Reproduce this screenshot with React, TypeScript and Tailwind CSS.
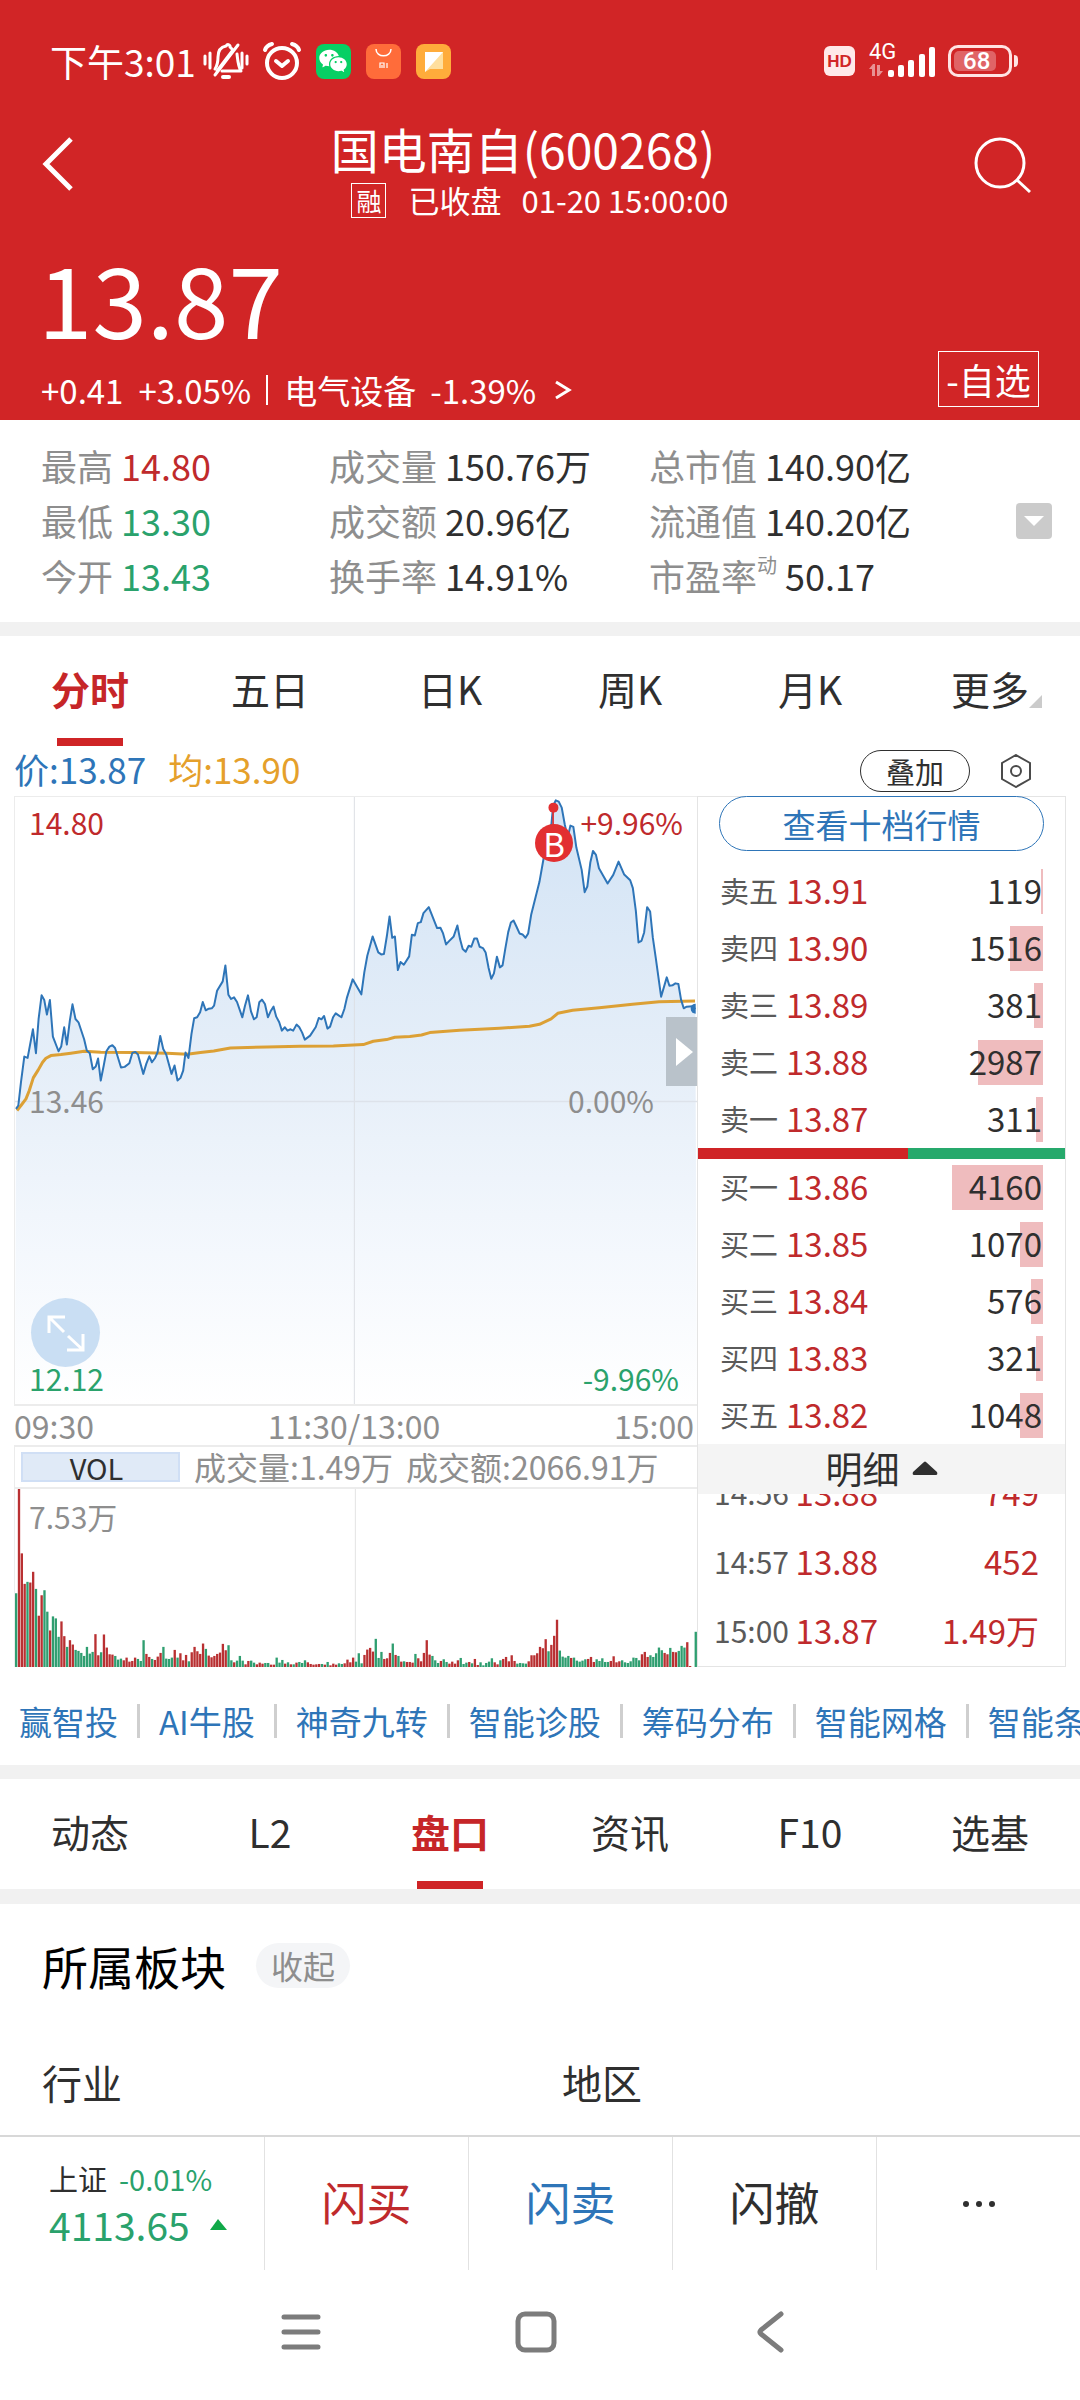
import React, { useState } from 'react';
import { RiWechatFill } from 'react-icons/ri';

interface BookRow {
  label: string;
  price: string;
  volume: string;
  bar: number;
}

interface Stat {
  label: string;
  sup?: string;
  value: string;
  color: string;
}

const PERIODS = ['分时', '五日', '日K', '周K', '月K', '更多'];
const SECTIONS = ['动态', 'L2', '盘口', '资讯', 'F10', '选基'];
const TOOLS = ['赢智投', 'AI牛股', '神奇九转', '智能诊股', '筹码分布', '智能网格', '智能条'];

const STATS: Stat[][] = [
  [
    { label: '最高', value: '14.80', color: 'text-[#bf2a2c]' },
    { label: '最低', value: '13.30', color: 'text-[#2aa26c]' },
    { label: '今开', value: '13.43', color: 'text-[#2aa26c]' },
  ],
  [
    { label: '成交量', value: '150.76万', color: 'text-[#2f2f2f]' },
    { label: '成交额', value: '20.96亿', color: 'text-[#2f2f2f]' },
    { label: '换手率', value: '14.91%', color: 'text-[#2f2f2f]' },
  ],
  [
    { label: '总市值', value: '140.90亿', color: 'text-[#2f2f2f]' },
    { label: '流通值', value: '140.20亿', color: 'text-[#2f2f2f]' },
    { label: '市盈率', sup: '动', value: '50.17', color: 'text-[#2f2f2f]' },
  ],
];

const ASKS: BookRow[] = [
  { label: '卖五', price: '13.91', volume: '119', bar: 2 },
  { label: '卖四', price: '13.90', volume: '1516', bar: 33 },
  { label: '卖三', price: '13.89', volume: '381', bar: 9 },
  { label: '卖二', price: '13.88', volume: '2987', bar: 65 },
  { label: '卖一', price: '13.87', volume: '311', bar: 7 },
];

const BIDS: BookRow[] = [
  { label: '买一', price: '13.86', volume: '4160', bar: 91 },
  { label: '买二', price: '13.85', volume: '1070', bar: 23 },
  { label: '买三', price: '13.84', volume: '576', bar: 12 },
  { label: '买四', price: '13.83', volume: '321', bar: 7 },
  { label: '买五', price: '13.82', volume: '1048', bar: 23 },
];

const TICKS = [
  { time: '14:56', price: '13.88', volume: '749' },
  { time: '14:57', price: '13.88', volume: '452' },
  { time: '15:00', price: '13.87', volume: '1.49万' },
];

const PRICE_LINE =
  '45,955 52,945 60,875 70,798 80,802 96,716 105,788 113,685 122,614 130,628 138,672 147,628 156,738 173,782 181,768 190,710 198,762 207,690 215,641 224,685 233,695 250,746 258,780 267,788 276,836 285,828 292,804 300,870 309,825 317,782 326,768 335,764 343,772 361,831 372,829 386,818 395,787 404,784 412,792 428,850 437,820 446,797 454,815 463,803 471,785 479,736 488,775 497,792 513,850 522,825 531,870 540,862 548,840 555,786 564,802 573,730 581,683 590,680 599,665 607,634 616,659 625,654 634,653 641,645 650,600 667,572 675,524 684,612 692,625 701,620 710,634 726,680 734,645 743,614 752,662 761,686 769,680 777,635 785,627 794,640 803,680 811,662 820,648 828,678 837,695 845,720 854,710 862,720 871,716 879,720 889,702 897,709 906,726 914,747 930,735 947,709 956,682 964,686 972,676 982,714 990,708 999,680 1007,668 1024,680 1033,655 1041,620 1058,566 ' +
  '1084,611 1093,545 1102,495 1118,437 1135,485 1144,491 1152,490 1161,435 1169,377 1177,441 1185,437 1194,538 1202,514 1212,522 1228,497 1236,432 1245,434 1254,397 1263,394 1271,367 1287,349 1312,412 1322,411 1330,428 1339,461 1348,451 1362,437 1373,404 1381,445 1389,475 1398,483 1407,465 1415,468 1424,443 1432,443 1440,468 1450,472 1458,485 1467,532 1475,564 1483,548 1492,498 1501,530 1509,524 1517,475 1526,424 1534,395 1542,389 1551,408 1560,428 1569,431 1578,441 1586,428 1595,372 1620,273 1632,205 1646,120 1656,100 1661,45 1669,28 1678,32 1687,50 1696,100 1705,140 1713,104 1722,108 1731,170 1747,237 1756,304 1764,287 1773,215 1781,180 1790,192 1799,232 1825,278 1842,252 1858,212 1875,251 1893,268 1901,292 1910,360 1918,455 1927,450 1935,425 1944,349 1953,362 1961,440 1970,502 1986,618 2003,560 2011,585 2020,584 2029,578 2038,580 2046,627 2054,653 2063,648 2080,647 2089,655';

const AVERAGE_LINE =
  '48,960 60,945 75,925 85,900 97,862 112,838 125,815 135,803 150,795 180,792 210,788 250,782 300,785 400,786 500,788 560,791 600,786 640,781 690,772 800,769 900,767 1000,766 1090,762 1120,752 1160,747 1185,740 1230,738 1265,733 1290,726 1380,719 1500,713 1590,707 1620,701 1655,685 1675,668 1720,659 1800,651 1900,641 1980,633 2088,631';

// One entry per minute: r = up, g = down, then the bar height
const VOLUMES = (
  'g220 r531 r339 r248 g254 r252 r284 g233 r153 r214 g229 g165 r109 g151 g145 g90 r136 r92 g60 r80 r67 g51 g48 g42 g33 g60 g40 g45 r98 r35 g44 r97 r58 r38 r37 g33 g22 g25 r20 r28 r16 r18 r28 g24 g18 g80 r39 r30 g24 r21 ' +
  'r31 r42 g60 g25 g24 g28 r51 g28 r41 r20 r36 g17 r44 r60 r47 r39 r70 g54 r34 r29 r33 r39 r43 r69 r50 g65 g20 r14 g19 g33 g19 r8 r18 g19 g13 r8 r13 r10 g12 g12 r7 r7 g28 g13 g21 r10 g14 r8 g8 r13 ' +
  'g15 g12 g20 r14 r9 r7 r8 r9 g9 r7 g15 r5 r10 r7 g11 g9 r11 r22 r14 r28 g16 g41 g11 r36 r52 r57 r46 g84 g27 g45 r24 r26 r42 g70 r36 g33 r16 g17 r15 r15 r13 g39 r26 r17 r42 r80 r37 g33 g20 g12 ' +
  'r18 g23 g15 r10 r16 r10 r20 g27 g9 g13 r15 g11 r24 r6 g14 g5 g12 g16 g26 r14 r8 g20 r24 r30 r17 r35 r18 g10 g12 g11 g10 r17 r35 r35 r41 r60 r56 r83 g47 r66 r93 r141 g49 g31 g28 g33 r27 g28 g19 g16 ' +
  'g19 g23 r24 r30 r15 g23 g18 g26 g15 g15 r18 r32 r14 r17 g20 g14 g12 g17 g28 g27 g20 r38 r45 r30 g35 g30 g41 g58 g50 r42 r38 g57 r45 r44 g48 g63 g58 r74 r3 r0 g105'
).split(' ');

const StatusBar: React.FC = () => (
  <div className="flex h-[122px] items-center justify-between pl-[50px] pr-[62px]">
    <div className="flex items-center">
      <span className="text-[37px] leading-[44px]">下午3:01</span>
      <svg className="ml-[7px] h-[40px] w-[46px]" viewBox="0 0 46 40" fill="none" stroke="currentColor" strokeWidth="3" strokeLinecap="round">
        <path d="M12 28c2-3 3-5 3-12 0-6 3-10 8-11 2-3 5 0 4 1l2 2M34 13c1 8 1 12 4 17H19" strokeLinejoin="round" />
        <path d="M35 4 12 34M30 9 14 30M2 15v8M7 12v15M44 15v8M39 12v15" />
        <path d="M20 36h6" strokeWidth="4" />
      </svg>
      <svg className="ml-[13px] h-[40px] w-[40px]" viewBox="0 0 40 40" fill="none" stroke="currentColor" strokeWidth="4" strokeLinecap="round" strokeLinejoin="round">
        <circle cx="20" cy="22" r="15" />
        <path d="m14 20 6 5 6-5M3 9c1-3 3-5 7-6M37 9c-1-3-3-5-7-6" />
      </svg>
      <span className="ml-[14px] flex h-[35px] w-[35px] items-center justify-center rounded-lg bg-[#07cf64]">
        <RiWechatFill className="h-[30px] w-[30px]" />
      </span>
      <svg className="ml-[15px] h-[35px] w-[35px]" viewBox="0 0 35 35">
        <rect width="35" height="35" rx="8" fill="#ff6c3a" />
        <path d="M10 5c0 9 15 9 15 0" fill="none" stroke="#fff" strokeWidth="1.5" />
        <path d="M14 24v-5h4v5M16 21v3M21 19v5" fill="none" stroke="#fff" strokeWidth="1.2" />
      </svg>
      <svg className="ml-[15px] h-[35px] w-[35px]" viewBox="0 0 35 35">
        <rect width="35" height="35" rx="8" fill="#ffac3b" />
        <path d="M9 8h18v17H14l-5 3z" fill="#ffdf9e" />
        <path d="M9 8h18L9 28z" fill="#fff" />
      </svg>
    </div>
    <div className="flex items-center">
      <span className="flex h-[30px] w-[31px] items-center justify-center rounded-md bg-[#ffe9e9] font-['Liberation_Sans'] text-[17px] font-bold leading-none text-[#d12526]">
        HD
      </span>
      <div className="relative ml-[14px] h-[34px] w-[68px]">
        <span className="absolute left-0 -top-[4px] font-['Roboto'] text-[22px] leading-[24px]">4G</span>
        <svg className="h-[34px] w-[68px]" viewBox="0 0 68 34" fill="currentColor">
          <g opacity=".5">
            <path d="M0 25 4 20h2v12H3V25zM14 27l-4 5H8V21h3v6z" />
          </g>
          <rect x="19" y="26" width="6" height="7" rx="2" />
          <rect x="29" y="21" width="6" height="12" rx="2" />
          <rect x="39" y="16" width="6" height="17" rx="2" />
          <rect x="50" y="10" width="6" height="23" rx="2" />
          <rect x="60" y="3" width="6" height="30" rx="2" />
        </svg>
      </div>
      <div className="ml-[11px] flex h-[32px] w-[64px] items-center rounded-[10px] border-[3px] border-[#ffe3e3] p-[3px]">
        <span className="flex h-full w-[42px] items-center rounded-[5px] bg-[#e06466] pl-[9px] font-['Roboto'] text-[24px] font-medium leading-none">
          68
        </span>
      </div>
      <span className="ml-[2px] h-[12px] w-[4px] rounded-r bg-[#ffe3e3]" />
    </div>
  </div>
);

const Header: React.FC = () => (
  <header className="bg-[#d12526] text-white">
    <StatusBar />
    <div className="flex h-[106px] items-start justify-between">
      <button type="button" aria-label="返回" className="flex h-[84px] w-[110px] items-center pl-[41px]">
        <svg className="h-[54px] w-[32px]" viewBox="0 0 32 54" fill="none" stroke="currentColor" strokeWidth="5">
          <path d="M30 2 5 27l25 25" />
        </svg>
      </button>
      <div className="flex flex-col items-center">
        <h1 className="pr-[34px] text-[48px] leading-[52px]">国电南自(600268)</h1>
        <div className="flex h-[52px] items-center text-[31px] leading-[34px]">
          <span className="mr-[22px] flex h-[35px] w-[35px] items-center justify-center border border-white text-[25px]">融</span>
          <span className="mr-[20px]">已收盘</span>
          <span>01-20 15:00:00</span>
        </div>
      </div>
      <button type="button" aria-label="搜索" className="flex h-[88px] w-[110px] items-center">
        <svg className="ml-[4px] h-[58px] w-[58px]" viewBox="0 0 58 58" fill="none" stroke="currentColor" strokeWidth="3">
          <circle cx="26" cy="26" r="24" />
          <path d="m43 43 13 12" />
        </svg>
      </button>
    </div>
    <div className="flex items-end justify-between px-[41px] pt-[8px]">
      <div>
        <div className="-ml-[3px] h-[120px] text-[98px] leading-[120px]">13.87</div>
        <div className="flex h-[64px] items-center pt-[3px] text-[33px] leading-[40px]">
          <span className="mr-[15px]">+0.41</span>
          <span className="mr-[15px]">+3.05%</span>
          <span className="mr-[16px] h-[30px] w-[2px] bg-white" />
          <a href="#sector" className="flex items-center">
            <span className="mr-[14px]">电气设备</span>
            <span className="mr-[18px]">-1.39%</span>
            <svg className="h-[20px] w-[18px]" viewBox="0 0 18 20" fill="none" stroke="currentColor" strokeWidth="3">
              <path d="m2 2 13 8-13 8" />
            </svg>
          </a>
        </div>
      </div>
      <button type="button" className="mb-[13px] h-[56px] w-[101px] whitespace-nowrap border border-white text-[36px] leading-[50px]">-自选</button>
    </div>
  </header>
);

const Quote: React.FC = () => (
  <section className="flex h-[202px] items-center justify-between pl-[41px] pr-[28px]">
    <div className="flex flex-1 text-[36px] leading-[52px]">
      {STATS.map((column, i) => (
        <dl key={i} className={i === 0 ? 'w-[288px]' : i === 1 ? 'w-[320px]' : 'flex-1'}>
          {column.map((s) => (
            <div key={s.label} className="flex h-[55px]">
              <dt className="mr-[8px] flex text-[#8e8e8e]">
                {s.label}
                {s.sup && <span className="text-[20px] leading-[32px]">{s.sup}</span>}
              </dt>
              <dd className={s.color}>{s.value}</dd>
            </div>
          ))}
        </dl>
      ))}
    </div>
    <button type="button" aria-label="展开" className="flex h-[36px] w-[36px] items-center justify-center rounded-sm bg-[#cbcbcb]">
      <svg className="h-[10px] w-[20px]" viewBox="0 0 20 10" fill="#fff">
        <path d="M0 0h20L10 10z" />
      </svg>
    </button>
  </section>
);

const Tabs: React.FC<{ items: string[]; initial: string; className: string }> = ({ items, initial, className }) => {
  const [active, setActive] = useState<string>(initial);
  return (
    <nav className={`grid grid-cols-6 text-[39px] leading-[54px] text-[#2f2f2f] ${className}`}>
      {items.map((item) => (
        <button
          key={item}
          type="button"
          onClick={() => setActive(item)}
          className={`relative flex items-start justify-center pt-[25px] ${item === active ? 'font-bold text-[#c62628]' : ''}`}
        >
          {item}
          {item === '更多' && (
            <svg className="mt-[34px] -mr-[13px] h-[13px] w-[13px]" viewBox="0 0 13 13" fill="#cbcbcb">
              <path d="M13 0v13H0z" />
            </svg>
          )}
          {item === active && <span className="absolute bottom-0 h-[8px] w-[66px] bg-[#cf2426]" />}
        </button>
      ))}
    </nav>
  );
};

const PriceChart: React.FC = () => (
  <div className="relative h-[610px] border-l border-t border-[#ececec] text-[30px] leading-[36px]">
    <svg className="block h-full w-full" viewBox="42 18 2052 1830" preserveAspectRatio="none">
      <defs>
        <linearGradient id="area" x1="0" y1="18" x2="0" y2="1848" gradientUnits="userSpaceOnUse">
          <stop offset="0" stopColor="#d2e3f5" />
          <stop offset="0.5" stopColor="#e8f0f9" />
          <stop offset="0.75" stopColor="#f4f8fd" />
          <stop offset="1" stopColor="#ffffff" />
        </linearGradient>
      </defs>
      <polygon points={`${PRICE_LINE} 2094,1848 42,1848`} fill="url(#area)" />
      <path d="M1063 18v1830" stroke="#dcdfe4" strokeWidth="3" />
      <path d="M42 933h2052" stroke="#dde2ea" strokeWidth="4" />
      <path d="M42 1845h2052" stroke="#ececec" strokeWidth="6" />
      <polyline points={AVERAGE_LINE} fill="none" stroke="#dca035" strokeWidth="9" strokeLinejoin="round" />
      <polyline points={PRICE_LINE} fill="none" stroke="#2e75b8" strokeWidth="6" strokeLinejoin="round" />
      <path d="M1661 50v60" stroke="#e22f31" strokeWidth="5" />
      <circle cx="1662" cy="50" r="15" fill="#e22f31" />
      <path d="M2090 639a15 15 0 0 0 0 30z" fill="#2e75b8" />
    </svg>
    <span className="absolute left-[14px] top-[7px] text-[#bf2a2c]">14.80</span>
    <span className="absolute right-[14px] top-[7px] text-[#bf2a2c]">+9.96%</span>
    <span className="absolute left-[14px] top-[285px] text-[#8e8e8e]">13.46</span>
    <span className="absolute right-[43px] top-[285px] text-[#8e8e8e]">0.00%</span>
    <span className="absolute bottom-[10px] left-[14px] text-[#2aa26c]">12.12</span>
    <span className="absolute bottom-[10px] right-[18px] text-[#2aa26c]">-9.96%</span>
    <span className="absolute left-[520px] top-[27px] flex h-[38px] w-[38px] items-center justify-center rounded-full bg-[#e22f31] text-[33px] leading-[34px] text-white">
      B
    </span>
    <button type="button" aria-label="收起盘口" className="absolute right-0 top-[220px] flex h-[69px] w-[31px] items-center justify-center bg-[#b9c2ca]">
      <svg className="ml-[5px] h-[28px] w-[17px]" viewBox="0 0 17 28" fill="#fff">
        <path d="M0 0v28l17-14z" />
      </svg>
    </button>
    <button type="button" aria-label="全屏" className="absolute bottom-[39px] left-[16px] flex h-[69px] w-[69px] items-center justify-center rounded-full bg-[#c9def3]">
      <svg className="h-[38px] w-[38px]" viewBox="0 0 38 38" fill="none" stroke="#fff" strokeWidth="3">
        <path d="M2 19V3h16M2 3l15 15M36 20v16H20M36 36 21 22" />
      </svg>
    </button>
  </div>
);

const VolumeChart: React.FC = () => (
  <div className="relative h-[178px] border-l border-[#ececec]">
    <svg className="block h-full w-full" viewBox="42 30 2052 531" preserveAspectRatio="none">
      <path d="M1066 30v531" stroke="#e3e3e3" strokeWidth="3" />
      {VOLUMES.map((v, i) => {
        const height = Number(v.slice(1));
        return (
          <rect key={i} x={42 + i * 8.52} y={561 - height} width="7" height={height} fill={v[0] === 'r' ? '#b93032' : '#2f9e70'} />
        );
      })}
    </svg>
    <span className="absolute left-[14px] top-[9px] text-[30px] leading-[36px] text-[#8e8e8e]">7.53万</span>
  </div>
);

const BookTable: React.FC<{ rows: BookRow[] }> = ({ rows }) => (
  <table className="w-full text-[33px] leading-[44px]">
    <tbody>
      {rows.map((row) => (
        <tr key={row.label} className="h-[57px]">
          <th scope="row" className="w-[88px] p-0 pb-[4px] pl-[22px] text-left text-[29px] font-normal text-[#5a5a5a]">{row.label}</th>
          <td className="p-0 pb-[4px] text-[#bf2a2c]">{row.price}</td>
          <td className="relative p-0 pb-[4px] pr-[23px] text-right text-[#2f2f2f]">
            <span className="absolute right-[22px] top-[6px] h-[45px] bg-[#efbcbe]" style={{ width: row.bar }} />
            <span className="relative">{row.volume}</span>
          </td>
        </tr>
      ))}
    </tbody>
  </table>
);

const OrderBook: React.FC = () => (
  <aside className="flex w-[369px] flex-col border border-[#e4e4e4]">
    <button type="button" className="mx-[21px] -mt-px h-[55px] rounded-full border-[1px] border-[#2e75b8] text-[33px] leading-[48px] text-[#2e75b8]">
      查看十档行情
    </button>
    <div className="mt-[12px]">
      <BookTable rows={ASKS} />
    </div>
    <div className="flex h-[11px]">
      <div className="w-[210px] bg-[#cf2426]" />
      <div className="flex-1 bg-[#26a96c]" />
    </div>
    <BookTable rows={BIDS} />
    <button type="button" className="flex h-[50px] shrink-0 items-center justify-center bg-[#f4f4f4] pb-[3px] text-[37px] leading-[46px] text-[#2f2f2f]">
      明细
      <svg className="ml-[12px] h-[14px] w-[26px]" viewBox="0 0 26 14" fill="#2f2f2f">
        <path d="M12 1q1-1 2 0l11 10q1 3-1 3H2q-2 0-1-3z" />
      </svg>
    </button>
    <div className="flex h-[172px] flex-col justify-end overflow-hidden">
      <table className="w-full shrink-0 text-[33px] leading-[44px] text-[#bf2a2c]">
        <tbody>
          {TICKS.map((tick) => (
            <tr key={tick.time} className="h-[69px]">
              <td className="w-[92px] p-0 pb-[4px] pl-[16px] text-[30px] text-[#5a5a5a]">{tick.time}</td>
              <td className="w-[88px] p-0 pb-[4px] text-right">{tick.price}</td>
              <td className="p-0 pb-[4px] pr-[26px] text-right">{tick.volume}</td>
            </tr>
          ))}
        </tbody>
      </table>
    </div>
  </aside>
);

const ChartPanel: React.FC = () => (
  <section className="px-[14px]">
    <div className="flex h-[50px] items-center text-[35px] leading-[44px]">
      <span className="mr-[22px] pb-[4px] text-[#2e75b8]">价:13.87</span>
      <span className="pb-[4px] text-[#e5a02b]">均:13.90</span>
      <button type="button" className="ml-auto h-[42px] w-[110px] rounded-full border-[1px] border-[#2f2f2f] text-[29px] leading-[38px] text-[#2f2f2f]">
        叠加
      </button>
      <button type="button" aria-label="设置" className="ml-[30px] mr-[34px]">
        <svg className="h-[34px] w-[32px]" viewBox="0 0 32 34" fill="none" stroke="#4a4a4a" strokeWidth="2">
          <path d="m16 1 14 8v16l-14 8-14-8V9z" />
          <circle cx="16" cy="17" r="5" />
        </svg>
      </button>
    </div>
    <div className="flex">
      <div className="min-w-0 flex-1">
        <PriceChart />
        <div className="flex h-[39px] justify-between pr-[3px] text-[32px] leading-[38px] text-[#8e8e8e]">
          <span>09:30</span>
          <span>11:30/13:00</span>
          <span>15:00</span>
        </div>
        <div className="flex h-[44px] items-center border-y-2 border-l border-[#ececec] pl-[6px] text-[32px] leading-[38px] text-[#8e8e8e]">
          <button type="button" className="mr-[14px] h-[30px] w-[159px] border-2 border-[#d0dff5] bg-[#e0eaf7] pr-[8px] text-[29px] leading-[24px] text-[#2f2f2f]">
            VOL
          </button>
          <span className="mr-[13px] pb-[2px]">成交量:1.49万</span>
          <span className="pb-[2px]">成交额:2066.91万</span>
        </div>
        <VolumeChart />
      </div>
      <OrderBook />
    </div>
  </section>
);

const BottomBar: React.FC = () => (
  <footer className="mt-auto">
    <div className="flex h-[135px] border-t-2 border-[#d8d8d8]">
      <a href="#index" className="w-[264px] pl-[49px] pt-[22px]">
        <div className="flex text-[29px] leading-[38px]">
          <span className="mr-[12px] text-[#2f2f2f]">上证</span>
          <span className="text-[#2aa26c]">-0.01%</span>
        </div>
        <div className="flex items-center text-[39px] leading-[54px] text-[#2aa26c]">
          4113.65
          <svg className="ml-[20px] h-[11px] w-[17px]" viewBox="0 0 17 11" fill="#10a848">
            <path d="m8 0 9 11H0z" />
          </svg>
        </div>
      </a>
      <div className="grid flex-1 grid-cols-4 text-[45px] leading-[60px]">
        <button type="button" className="border-l border-[#e2e2e2] pb-[4px] text-[#bf2a2c]">闪买</button>
        <button type="button" className="border-l border-[#e2e2e2] pb-[4px] text-[#2e75b8]">闪卖</button>
        <button type="button" className="border-l border-[#e2e2e2] pb-[4px] text-[#2f2f2f]">闪撤</button>
        <button type="button" aria-label="更多操作" className="flex items-center justify-center border-l border-[#e2e2e2]">
          <svg className="h-[6px] w-[32px]" viewBox="0 0 32 6" fill="#2f2f2f">
            <circle cx="3" cy="3" r="3" />
            <circle cx="16" cy="3" r="3" />
            <circle cx="29" cy="3" r="3" />
          </svg>
        </button>
      </div>
    </div>
    <div className="flex h-[130px] items-center justify-center gap-[194px] pb-[6px] pr-[8px] text-[#7c7c7c]">
      <button type="button" aria-label="最近任务">
        <svg className="h-[42px] w-[40px]" viewBox="0 0 40 42" fill="none" stroke="currentColor" strokeWidth="5" strokeLinecap="round">
          <path d="M3 6h34M3 21h34M3 36h34" />
        </svg>
      </button>
      <button type="button" aria-label="主屏幕">
        <svg className="h-[42px] w-[42px]" viewBox="0 0 42 42" fill="none" stroke="currentColor" strokeWidth="5">
          <rect x="3" y="3" width="36" height="36" rx="7" />
        </svg>
      </button>
      <button type="button" aria-label="后退">
        <svg className="h-[42px] w-[40px]" viewBox="0 0 40 42" fill="none" stroke="currentColor" strokeWidth="5" strokeLinecap="round" strokeLinejoin="round">
          <path d="M30 3 10 19q-2 2 0 4l20 16" />
        </svg>
      </button>
    </div>
  </footer>
);

export default function App() {
  return (
    <div className="flex min-h-screen flex-col overflow-hidden bg-white font-['Noto_Sans_CJK_SC',sans-serif]">
      <Header />
      <Quote />
      <div className="h-[14px] bg-[#f1f1f1]" />
      <Tabs items={PERIODS} initial="分时" className="h-[110px]" />
      <ChartPanel />

      <nav className="flex h-[98px] items-center overflow-hidden whitespace-nowrap pl-[19px] pt-[10px] text-[33px] leading-[44px] text-[#2e75b8]">
        {TOOLS.map((tool, i) => (
          <React.Fragment key={tool}>
            {i > 0 && <span className="mx-[19px] h-[34px] w-[3px] shrink-0 bg-[#cfcfcf]" />}
            <a href="#tool" className="shrink-0">{tool}</a>
          </React.Fragment>
        ))}
      </nav>
      <div className="h-[14px] bg-[#f1f1f1]" />
      <Tabs items={SECTIONS} initial="盘口" className="h-[110px]" />
      <div className="h-[15px] bg-[#f1f1f1]" />

      <section className="px-[42px]">
        <div className="flex h-[122px] items-center">
          <h2 className="mr-[30px] text-[46px] leading-[60px] text-black">所属板块</h2>
          <button type="button" className="h-[45px] rounded-full bg-[#f4f5f7] px-[15px] text-[32px] leading-[40px] text-[#8e8e8e]">
            收起
          </button>
        </div>
        <div className="grid grid-cols-[520px_1fr] pt-[26px] text-[40px] leading-[60px] text-[#2f2f2f]">
          <h3>行业</h3>
          <h3>地区</h3>
        </div>
      </section>
      <BottomBar />
    </div>
  );
}
